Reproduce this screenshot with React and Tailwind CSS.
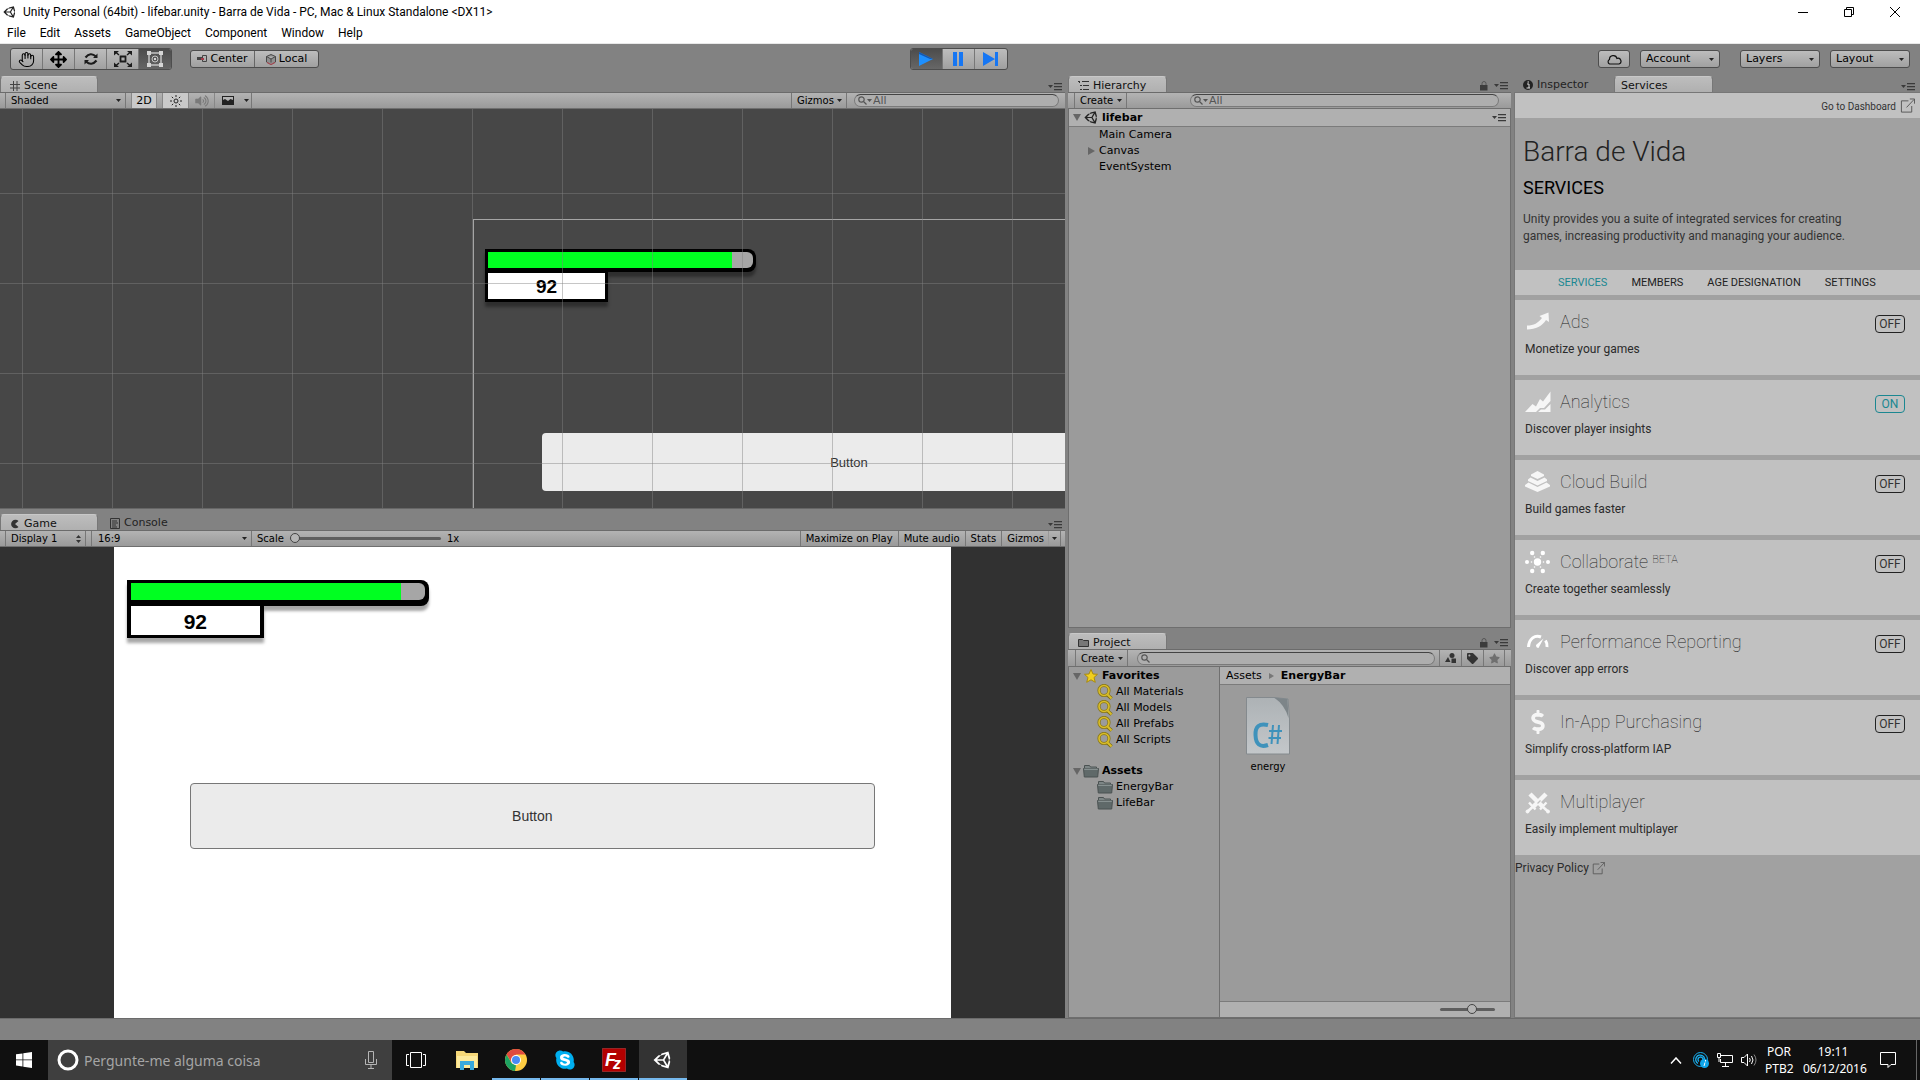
import React, { useState } from 'react'
import { FaUnity, FaArrowsAlt, FaDollarSign, FaTag, FaStar, FaSkype, FaVolumeUp } from 'react-icons/fa'
import { Hand } from 'lucide-react'

const EDITOR_FONT = "font-['DejaVu_Sans',Verdana,sans-serif]"
const WINDOWS_FONT = "font-['Noto_Sans','Segoe_UI',sans-serif]"
const WEB_FONT = 'font-[Roboto,sans-serif]'

const BAR = 'flex shrink-0 items-stretch border-y border-t-[#6b6b6b] border-b-[#6f6f6f] bg-gradient-to-b from-[#b3b3b3] to-[#9a9a9a] text-[10px] leading-[15px] text-black'
const RAISED = 'border border-[#4d4d4d] bg-gradient-to-b from-[#bdbdbd] to-[#a0a0a0]'

const services = [
  { name: 'Ads', text: 'Monetize your games', state: 'OFF', icon: AdsIcon },
  { name: 'Analytics', text: 'Discover player insights', state: 'ON', icon: AnalyticsIcon },
  { name: 'Cloud Build', text: 'Build games faster', state: 'OFF', icon: CloudBuildIcon },
  { name: 'Collaborate', tag: 'BETA', text: 'Create together seamlessly', state: 'OFF', icon: CollaborateIcon },
  { name: 'Performance Reporting', text: 'Discover app errors', state: 'OFF', icon: PerformanceIcon },
  { name: 'In-App Purchasing', text: 'Simplify cross-platform IAP', state: 'OFF', icon: PurchasingIcon },
  { name: 'Multiplayer', text: 'Easily implement multiplayer', icon: MultiplayerIcon }
]

/* ---------- icons ---------- */

function Caret({ className = 'text-[#222]' }) {
  return (
    <svg viewBox="0 0 5 3" className={`pointer-events-none h-[3px] w-[5px] shrink-0 ${className}`} fill="currentColor">
      <path d="M0 0h5L2.500 3z" />
    </svg>
  )
}

function MenuIcon() {
  return (
    <button aria-label="Panel menu" className="flex h-4 items-center">
      <svg viewBox="0 0 14 8" className="h-2 w-[14px]" fill="#3a3a3a">
        <path d="M0 2h5L2.500 5zM6 0h8v1.200H6zM6 3h8v1.200H6zM6 6h8v1.200H6z" />
      </svg>
    </button>
  )
}

function LockIcon() {
  return (
    <svg viewBox="0 0 8 10" className="h-[10px] w-2">
      <path d="M2 4V2.500A2 2 0 0 1 6 2.500V4" fill="none" stroke="#555" />
      <path d="M0 4h7.500v5.500H0z" fill="#3c3c3c" />
    </svg>
  )
}

function SearchIcon() {
  return (
    <svg viewBox="0 0 9 9" className="h-[9px] w-[9px] shrink-0" fill="none" stroke="#555" strokeWidth="1.200">
      <circle cx="3.500" cy="3.500" r="2.700" />
      <path d="M5.500 5.500L8.500 8.500" />
    </svg>
  )
}

function ExternalIcon({ className }) {
  return (
    <svg viewBox="0 0 16 16" className={className} fill="none" stroke="#555">
      <path d="M9 2.500H1.500v12h11V8M7 9.500L15 1M10.500 .5H15.500V5.500" />
    </svg>
  )
}

function AdsIcon() {
  return (
    <svg viewBox="0 0 26 24" className="h-6 w-[26px]" fill="#f6f6f6">
      <path d="M2 15.500C9 15.500 13 13 17 8L14.500 6L23.500 2.500L24 12L21 10C17 16 11 19.500 2 19.500z" />
    </svg>
  )
}

function AnalyticsIcon() {
  return (
    <svg viewBox="0 0 26 24" className="h-6 w-[26px]" fill="#f6f6f6">
      <path d="M0 22L7.500 14L11 16.500L15 9L18 11.500L25.500 1.500V11L19 18H15L11 22z" />
      <path d="M13 22L16 19.500H20L25.500 14V22z" />
    </svg>
  )
}

function CloudBuildIcon() {
  return (
    <svg viewBox="0 0 26 24" className="h-6 w-[26px]" fill="#f6f6f6">
      <path d="M6 4.500L12.500 1L19 4.500V6L12.500 9L6 6z" />
      <path d="M3 9.500L5.500 7.500L12.500 11L19.500 7.500L22 9.500V11L12.500 15.500L3 11z" />
      <path d="M0 15L3.500 12.500L12.500 17L21.500 12.500L25 15V16.500L12.500 22L0 16.500z" />
    </svg>
  )
}

function CollaborateIcon() {
  return (
    <svg viewBox="0 0 26 24" className="h-6 w-[26px]" fill="#fff">
      <circle cx="12.500" cy="12" r="3.700" />
      <circle cx="2" cy="12" r="2" />
      <circle cx="23" cy="12" r="2" />
      <circle cx="7.200" cy="3" r="2.200" />
      <circle cx="17.800" cy="3" r="2.200" />
      <circle cx="7.200" cy="21" r="2.200" />
      <circle cx="17.800" cy="21" r="2.200" />
      <circle cx="6.500" cy="12" r=".8" />
      <circle cx="18.500" cy="12" r=".8" />
      <circle cx="9.500" cy="7" r=".8" />
      <circle cx="15.500" cy="7" r=".8" />
      <circle cx="9.500" cy="17" r=".8" />
      <circle cx="15.500" cy="17" r=".8" />
    </svg>
  )
}

function PerformanceIcon() {
  return (
    <svg viewBox="0 0 26 24" className="h-6 w-[26px]" fill="none" stroke="#fff">
      <path d="M3.500 17C4 8.500 10 4.500 16 7M20.500 10.500Q22.500 13.500 22 17" strokeWidth="3" />
      <path d="M18.500 8.500L11 15Q11 18 13.500 18Z" fill="#fff" stroke="none" />
    </svg>
  )
}

function PurchasingIcon() {
  return <FaDollarSign className="h-6 w-[26px] text-[#f6f6f6]" />
}

function MultiplayerIcon() {
  return (
    <svg viewBox="0 0 26 24" className="h-6 w-[26px]" fill="none" stroke="#f6f6f6">
      <path d="M5 4L18 17M21 4L8 17" strokeWidth="4.500" />
      <path d="M12.500 13.500L15.500 10.500" stroke="#c1c1c1" strokeWidth="1.200" />
      <path d="M15 19.500L21.500 12.500M10.500 19.500L4 12.500" strokeWidth="2.400" />
      <path d="M18 17L23.500 22M7.500 17L2 22" strokeWidth="2.600" />
      <circle cx="23" cy="21.500" r="1.500" fill="#f6f6f6" />
      <circle cx="2.500" cy="21.500" r="1.500" fill="#f6f6f6" />
    </svg>
  )
}

function FolderIcon() {
  return (
    <svg viewBox="0 0 16 14" className="h-[14px] w-4 shrink-0">
      <path d="M1.500 1.500h5l1 1.500h6v3H1.500z" fill="#7d8686" stroke="#4b5252" />
      <path d="M.5 4.500h15l-.8 8.500H1.300z" fill="#5f6969" stroke="#4b5252" />
      <path d="M1.200 5.200h13.600" stroke="#99a2a2" />
    </svg>
  )
}

function FilterIcon() {
  return (
    <svg viewBox="0 0 16 16" className="h-4 w-4 shrink-0" fill="none">
      <path d="M10 10.500L14.500 14.500" stroke="#7b6b10" strokeWidth="3.600" />
      <circle cx="7" cy="6.500" r="5" stroke="#8a7818" strokeWidth="3.200" />
      <path d="M10.500 10.500L14.500 14.500" stroke="#d9bd2a" strokeWidth="2" />
      <circle cx="7" cy="6.500" r="5" stroke="#d9bd2a" strokeWidth="1.600" />
    </svg>
  )
}

/* ---------- shared controls ---------- */

function Tab({ active, icon, label, className = 'pl-[9px]' }) {
  return (
    <button
      role="tab"
      aria-selected={!!active}
      className={`flex h-4 items-center gap-1 pt-[2px] text-left text-[11px] leading-[14px] ${
        active
          ? 'rounded-t-sm border-x border-t border-[#777] border-t-[#c8c8c8] bg-gradient-to-b from-[#bdbdbd] to-[#b0b0b0] text-[#111]'
          : 'text-[#222]'
      } ${className}`}
    >
      {icon}
      {label}
    </button>
  )
}

function Select({ label, value, className = '', selectClass = '', children }) {
  return (
    <div className={`flex items-center ${className}`}>
      <select
        aria-label={label}
        className={`h-full min-w-0 flex-1 cursor-default appearance-none bg-transparent outline-none ${selectClass}`}
        defaultValue={value}
      >
        <option>{value}</option>
      </select>
      {children || <Caret />}
    </div>
  )
}

function SearchBox({ label, value = '', menu, className = '' }) {
  return (
    <label className={`flex h-[13px] items-center self-center rounded-full border border-[#7a7a7a] border-t-[#444] bg-[#aeaeae] px-[3px] ${className}`}>
      <SearchIcon />
      {menu && <Caret className="text-[#555]" />}
      <input aria-label={label} defaultValue={value} className="ml-px h-3 min-w-0 flex-1 bg-transparent text-[11px] leading-3 text-[#555] outline-none" />
    </label>
  )
}

const SLIDER = 'cursor-default appearance-none bg-transparent [&::-webkit-slider-runnable-track]:h-[3px] [&::-webkit-slider-runnable-track]:rounded-full [&::-webkit-slider-runnable-track]:bg-[#5e5e5e] [&::-webkit-slider-thumb]:-mt-[4px] [&::-webkit-slider-thumb]:h-[10px] [&::-webkit-slider-thumb]:w-[10px] [&::-webkit-slider-thumb]:appearance-none [&::-webkit-slider-thumb]:rounded-full [&::-webkit-slider-thumb]:border [&::-webkit-slider-thumb]:border-[#444] [&::-webkit-slider-thumb]:bg-[#b5b5b5]'

/* ---------- window chrome ---------- */

function TitleBar() {
  return (
    <header className={`h-11 shrink-0 border-b border-[#e8e8e8] bg-white text-black ${WEB_FONT}`}>
      <div className="flex h-6 items-center">
        <FaUnity className="ml-[3px] h-[14px] w-[14px] text-[#222]" />
        <h1 className="ml-[6px] text-[12px] leading-4">
          Unity Personal (64bit) - lifebar.unity - Barra de Vida - PC, Mac &amp; Linux Standalone &lt;DX11&gt;
        </h1>
        <div className="mr-[2px] ml-auto flex">
          <button aria-label="Minimize" className="flex h-5 w-[46px] items-center justify-center">
            <svg viewBox="0 0 10 10" className="h-[10px] w-[10px]" stroke="#000"><path d="M0 5.500h10" /></svg>
          </button>
          <button aria-label="Restore" className="flex h-5 w-[46px] items-center justify-center">
            <svg viewBox="0 0 10 10" className="h-[10px] w-[10px]" stroke="#000" fill="none"><path d="M.5 2.500h7v7h-7zM2.500 2.500v-2h7v7h-2" /></svg>
          </button>
          <button aria-label="Close" className="flex h-5 w-[46px] items-center justify-center">
            <svg viewBox="0 0 10 10" className="h-[10px] w-[10px]" stroke="#000"><path d="M0 0L10 10M10 0L0 10" /></svg>
          </button>
        </div>
      </div>
      <nav className="flex h-[18px] items-center gap-[14px] pl-[7px] text-[12px] leading-4">
        {['File', 'Edit', 'Assets', 'GameObject', 'Component', 'Window', 'Help'].map(item => (
          <button key={item}>{item}</button>
        ))}
      </nav>
    </header>
  )
}

function Toolbar() {
  const tool = 'flex w-8 items-center justify-center border-r border-[#777] last:border-r-0'
  const menu = 'h-[18px] w-20 rounded-[3px] px-[5px] text-[11px] leading-4'
  return (
    <div className="grid h-8 shrink-0 grid-cols-[1fr_auto_1fr] items-start pt-1">
      <div className="flex items-center">
        <div className={`ml-[10px] flex h-[22px] overflow-hidden rounded-[3px] ${RAISED}`}>
          <button aria-label="Hand" className={tool}><Hand className="h-[17px] w-[17px]" strokeWidth={1.5} /></button>
          <button aria-label="Move" className={tool}><FaArrowsAlt className="h-[17px] w-[17px]" /></button>
          <button aria-label="Rotate" className={tool}>
            <svg viewBox="0 0 16 16" className="h-4 w-4" fill="none" stroke="#1c1c1c" strokeWidth="2.200">
              <path d="M2.500 6.500Q7.500 .5 13 5.500M13.500 9.500Q8.500 15.500 3 10.500" />
              <path d="M14.500 2.500V7H10zM1.500 13.500V9H6z" fill="#1c1c1c" stroke="none" />
            </svg>
          </button>
          <button aria-label="Scale" className={tool}>
            <svg viewBox="0 0 18 16" className="h-4 w-[18px]" fill="none" stroke="#1c1c1c">
              <path d="M6.500 5.500h5v5h-5z" strokeWidth="1.800" />
              <path d="M5 4L1.500 1M13 4L16.500 1M5 12L1.500 15M13 12L16.500 15" strokeWidth="1.500" />
              <path d="M0 0h5L0 4.500zM18 0h-5L18 4.500zM0 16h5L0 11.500zM18 16h-5L18 11.500z" fill="#1c1c1c" stroke="none" />
            </svg>
          </button>
          <button aria-label="Rect" className={`${tool} bg-gradient-to-b from-[#4c4c4c] to-[#656565]`}>
            <svg viewBox="0 0 18 18" className="h-[18px] w-[18px]" fill="none" stroke="#c4c4c4">
              <path d="M3 3h12v12H3z" strokeWidth="1.500" />
              <circle cx="9" cy="9" r="3" />
              <path d="M8 8h2v2H8zM1 1h4v4H1zM13 1h4v4h-4zM1 13h4v4H1zM13 13h4v4h-4z" fill="#d5d5d5" stroke="none" />
            </svg>
          </button>
        </div>
        <div className={`ml-[18px] flex h-[18px] rounded-[3px] text-[11px] leading-4 ${RAISED}`}>
          <button className="flex w-16 items-center justify-center gap-[3px] border-r border-[#666]">
            <svg viewBox="0 0 10 8" className="h-2 w-[10px]">
              <path d="M0 2h5v3H0z" fill="#444" />
              <path d="M5.500 .5h4v6h-4z" fill="none" stroke="#444" />
              <path d="M4 3h3v2H4z" fill="#a33b4a" />
            </svg>
            Center
          </button>
          <button className="flex w-[63px] items-center justify-center gap-[3px]">
            <svg viewBox="0 0 10 11" className="h-[11px] w-[10px]" fill="#8f8f8f" stroke="#484848">
              <path d="M5 .5L9.500 2.500V8L5 10.500L.5 8V2.500zM.5 2.500L5 5L9.500 2.500M5 5V10" />
              <path d="M1 8.500L5 10.500L9 8.500" stroke="#b0404c" />
            </svg>
            Local
          </button>
        </div>
      </div>
      <div className={`mr-[3px] flex h-[22px] overflow-hidden rounded-[3px] ${RAISED}`}>
        <button aria-label="Play" className={`${tool} bg-gradient-to-b from-[#4c4c4c] to-[#676767]`}>
          <svg viewBox="0 0 16 14" className="h-[14px] w-4"><path d="M1 0L15 7L1 14z" fill="#1e90ff" /><path d="M1 0L15 7H12L1 2z" fill="#1658b0" /></svg>
        </button>
        <button aria-label="Pause" className={tool}>
          <svg viewBox="0 0 10 14" className="h-[14px] w-[10px]" fill="#1676f3"><path d="M0 0h4v14H0zM6 0h4v14H6z" /></svg>
        </button>
        <button aria-label="Step" className={tool}>
          <svg viewBox="0 0 16 14" className="h-[14px] w-4" fill="#1676f3"><path d="M0 0L12 7L0 14zM12 0h3v14h-3z" /></svg>
        </button>
      </div>
      <div className="mt-[2px] flex items-center justify-end pr-[10px]">
        <button aria-label="Cloud services" className={`mr-[10px] flex h-[18px] w-8 items-center justify-center rounded-[3px] ${RAISED}`}>
          <svg viewBox="0 0 16 11" className="h-[11px] w-4" fill="none" stroke="#111" strokeWidth="1.200">
            <path d="M3.500 10A2.500 2.500 0 0 1 3.500 5.500A3.800 3.800 0 0 1 11 4.500A2.800 2.800 0 0 1 13 10z" />
          </svg>
        </button>
        <Select label="Account" value="Account" className={`mr-5 ${menu} ${RAISED}`} />
        <Select label="Layers" value="Layers" className={`mr-[10px] ${menu} ${RAISED}`} />
        <Select label="Layout" value="Layout" className={`${menu} ${RAISED}`} />
      </div>
    </div>
  )
}

/* ---------- scene and game ---------- */

function LifeBar({ value, small }) {
  return (
    <div className={`font-['Liberation_Sans',Arial,sans-serif] ${small ? 'w-[271px]' : 'w-[302px]'}`}>
      <div className={`rounded-r-lg bg-black shadow-[0_5px_3px_rgba(0,0,0,0.35)] ${small ? 'pt-[3px] pr-[3px] pb-1 pl-[3px]' : 'pt-[3px] pr-1 pb-[6px] pl-1'}`}>
        <div className={`overflow-hidden rounded-r-md bg-[#a6a6a6] ${small ? 'h-4' : 'h-[17px]'}`}>
          <div className="h-full bg-[#00ff21]" style={{ width: `${value}%` }} />
        </div>
      </div>
      <div
        className={`relative flex items-center justify-center border-black bg-white pt-[2px] font-bold text-black shadow-[0_5px_3px_rgba(0,0,0,0.35)] ${
          small ? 'h-[30px] w-[123px] border-x-[3px] border-t border-b-[3px] text-[19px]' : 'h-[32px] w-[137px] border-x-4 border-b-[3px] text-[21px]'
        }`}
      >
        {value}
      </div>
    </div>
  )
}

function ScenePanel() {
  return (
    <section className="flex min-h-0 flex-col">
      <div role="tablist" className="flex h-4 shrink-0 items-end">
        <Tab
          active
          label="Scene"
          className="w-[98px] pl-[9px]"
          icon={
            <svg viewBox="0 0 10 10" className="h-[10px] w-[10px]" stroke="#444"><path d="M3.500 0v10M7 0v10M0 3.500h10M0 7h10" /></svg>
          }
        />
        <div className="ml-auto flex h-[10px] items-center pr-[3px]"><MenuIcon /></div>
      </div>
      <div className={`h-[17px] ${BAR}`}>
        <Select label="Draw mode" value="Shaded" className="ml-[5px] w-[121px] border-x border-[#777] pr-1" selectClass="pl-[5px]" />
        <button className="ml-[5px] w-[26px] border-x border-[#888] bg-[#c9c9c9] text-[11px]">2D</button>
        <button aria-label="Scene lighting" className="ml-[5px] flex w-[27px] items-center justify-center border-x border-[#888] bg-[#c9c9c9]">
          <svg viewBox="0 0 12 12" className="h-3 w-3" fill="none" stroke="#222">
            <circle cx="6" cy="6" r="2" />
            <path d="M6 0v2M6 10v2M0 6h2M10 6h2M1.800 1.800l1.400 1.400M8.800 8.800l1.400 1.400M1.800 10.200l1.400-1.400M8.800 3.200l1.400-1.400" />
          </svg>
        </button>
        <button aria-label="Scene audio" className="flex w-[26px] items-center justify-center border-r border-[#888]">
          <FaVolumeUp className="h-3 w-[14px] text-[#7a7a7a]" />
        </button>
        <button aria-label="Scene effects" className="flex w-[37px] items-center gap-[10px] border-r border-[#777] pl-[7px]">
          <svg viewBox="0 0 12 9" className="h-[9px] w-3"><path d="M0 0h12v9H0z" fill="#222" /><path d="M1 4V1h10v3L8.500 3L6 5L3 3z" fill="#b5b5b5" /></svg>
          <Caret />
        </button>
        <button className="ml-auto flex w-14 items-center justify-between border-x border-[#777] pr-1 pl-[5px]">Gizmos<Caret /></button>
        <SearchBox label="Search scene" value="All" menu className="mr-[6px] ml-[7px] w-[205px]" />
      </div>
      <div className="relative min-h-0 flex-1 overflow-hidden border-b border-[#666] bg-[#474747]">
        <div className="absolute top-[110px] left-[473px] h-[576px] w-[1024px] border-t border-l border-[#a5a5a5]" />
        <div className="absolute top-[140px] left-[485px]"><LifeBar value={92} small /></div>
        <button className="absolute top-[324px] left-[542px] h-[58px] w-[614px] rounded bg-[#ebebeb] pt-px font-['Liberation_Sans',Arial,sans-serif] text-[13px] text-[#333]">
          Button
        </button>
        <svg className="pointer-events-none absolute inset-0 h-full w-full">
          <defs>
            <pattern id="scene-grid" width="90" height="90" x="22" y="84" patternUnits="userSpaceOnUse">
              <path d="M.5 0V90M0 .5H90" stroke="#808080" strokeOpacity=".45" fill="none" />
            </pattern>
          </defs>
          <rect width="100%" height="100%" fill="url(#scene-grid)" />
        </svg>
      </div>
    </section>
  )
}

function GamePanel() {
  const [scale, setScale] = useState(0)
  const toggle = 'border-l border-[#777]'
  return (
    <section className="flex min-h-0 flex-col">
      <div role="tablist" className="flex h-[17px] shrink-0 items-end">
        <Tab
          active
          label="Game"
          className="w-[98px] pl-[9px]"
          icon={<svg viewBox="0 0 10 10" className="h-[10px] w-[10px]" fill="#333"><path d="M8.500 2A4.300 4.300 0 1 0 8.500 8L5 5z" /></svg>}
        />
        <Tab
          label="Console"
          className="ml-[3px] pl-[9px]"
          icon={
            <svg viewBox="0 0 10 11" className="h-[11px] w-[10px]" fill="none" stroke="#333"><path d="M.5 .5h9v10h-9zM2 3h5M2 5h6M2 7h4M2 9h5" /></svg>
          }
        />
        <div className="ml-auto flex h-[10px] items-center pr-[3px]"><MenuIcon /></div>
      </div>
      <div className={`h-[17px] ${BAR}`}>
        <Select label="Display" value="Display 1" className="ml-[5px] w-[81px] border-x border-[#777] pr-1" selectClass="pl-[5px]">
          <svg viewBox="0 0 5 8" className="h-2 w-[5px]" fill="#333"><path d="M0 3h5L2.500 0zM0 5h5L2.500 8z" /></svg>
        </Select>
        <Select label="Aspect" value="16:9" className="ml-[5px] w-[161px] border-x border-[#777] pr-1" selectClass="pl-[6px]" />
        <label className="flex items-center pl-[5px]">
          Scale
          <input
            type="range"
            min="0"
            max="100"
            value={scale}
            onChange={e => setScale(Number(e.target.value))}
            className={`mx-[6px] h-3 w-[151px] ${SLIDER}`}
          />
          <output>1x</output>
        </label>
        <button className={`ml-auto px-[5px] ${toggle}`}>Maximize on Play</button>
        <button className={`px-[5px] ${toggle}`}>Mute audio</button>
        <button className={`px-[5px] ${toggle}`}>Stats</button>
        <button className={`flex items-center gap-1 pl-[5px] ${toggle}`}>
          Gizmos
          <span className="flex h-full w-3 items-center justify-center border-l border-[#999]"><Caret /></span>
        </button>
        <div className="w-[5px] border-l border-[#777]" />
      </div>
      <div className="flex min-h-0 flex-1 justify-center bg-[#313131]">
        <div className="relative aspect-video h-full bg-white">
          <div className="absolute top-[33px] left-[13px]"><LifeBar value={92} /></div>
          <button className="absolute top-[236px] left-[76px] h-[66px] w-[685px] rounded border border-[#777] bg-[#ebebeb] pt-px font-['Liberation_Sans',Arial,sans-serif] text-[14px] text-[#333]">
            Button
          </button>
        </div>
      </div>
    </section>
  )
}

/* ---------- hierarchy and project ---------- */

function HierarchyPanel() {
  return (
    <section className="flex min-h-0 flex-col">
      <div role="tablist" className="flex h-4 shrink-0 items-end">
        <Tab
          active
          label="Hierarchy"
          className="w-[99px] pl-[9px]"
          icon={<svg viewBox="0 0 11 9" className="h-[9px] w-[11px]" stroke="#333"><path d="M0 .5h2M4 .5h7M2 4.500h2M5 4.500h6M2 8.500h2M5 8.500h6M1.500 1v1" /></svg>}
        />
        <div className="ml-auto flex h-3 items-center gap-[6px] pr-[3px]"><LockIcon /><MenuIcon /></div>
      </div>
      <div className={`h-[17px] ${BAR}`}>
        <button className="ml-[6px] flex w-[53px] items-center justify-between border-x border-[#777] pr-1 pl-[5px]">Create<Caret /></button>
        <SearchBox label="Search hierarchy" value="All" menu className="mr-3 ml-auto w-[309px]" />
      </div>
      <div className="min-h-0 flex-1 border-x border-b border-[#6e6e6e] bg-[#9b9b9b] text-[11px] leading-4 text-black">
        <div className="flex h-[18px] items-center border-b border-[#7b7b7b] bg-[#b0b0b0] pr-1 pl-1">
          <svg viewBox="0 0 8 7" className="h-[7px] w-2" fill="#666"><path d="M0 0h8L4 7z" /></svg>
          <FaUnity className="mr-[3px] ml-[3px] h-[15px] w-[15px] text-[#222]" />
          <strong className="flex-1 pt-px">lifebar</strong>
          <MenuIcon />
        </div>
        <ul className="pl-[30px]">
          <li>Main Camera</li>
          <li className="-ml-[11px] flex items-center gap-1">
            <svg viewBox="0 0 7 8" className="h-2 w-[7px]" fill="#666"><path d="M0 0v8L7 4z" /></svg>
            Canvas
          </li>
          <li>EventSystem</li>
        </ul>
      </div>
    </section>
  )
}

function TreeHead({ icon, label }) {
  return (
    <div className="flex h-4 items-center pl-1">
      <svg viewBox="0 0 8 7" className="h-[7px] w-2" fill="#666"><path d="M0 0h8L4 7z" /></svg>
      <span className="mr-[3px] ml-[2px] flex w-4 justify-center">{icon}</span>
      <strong>{label}</strong>
    </div>
  )
}

function ProjectPanel() {
  return (
    <section className="flex min-h-0 flex-col">
      <div role="tablist" className="flex h-4 shrink-0 items-end">
        <Tab
          active
          label="Project"
          className="w-[99px] pl-[9px]"
          icon={<svg viewBox="0 0 11 9" className="h-[9px] w-[11px]" fill="#777" stroke="#333"><path d="M.5 1.500h4l1 1h5v6H.5z" /></svg>}
        />
        <div className="ml-auto flex h-3 items-center gap-[6px] pr-[3px]"><LockIcon /><MenuIcon /></div>
      </div>
      <div className={`h-[18px] ${BAR}`}>
        <button className="ml-[7px] flex w-[53px] items-center justify-between border-x border-[#777] pr-1 pl-[5px]">Create<Caret /></button>
        <SearchBox label="Search project" className="ml-[9px] flex-1" />
        <button aria-label="Search by type" className="ml-1 flex w-[22px] items-center justify-center border-l border-[#777]">
          <svg viewBox="0 0 11 10" className="h-[10px] w-[11px]" fill="#333"><circle cx="7" cy="2.500" r="2.500" /><path d="M0 9L3 4L5.500 9zM6.500 5.500H11V10H6.500z" /></svg>
        </button>
        <button aria-label="Search by label" className="flex w-[22px] items-center justify-center border-l border-[#777]">
          <FaTag className="h-[11px] w-[11px] text-[#333]" />
        </button>
        <button aria-label="Save search" className="flex w-[22px] items-center justify-center border-x border-[#777]">
          <FaStar className="h-[11px] w-[11px] text-[#6f6f6f]" />
        </button>
        <div className="w-[6px]" />
      </div>
      <div className="flex min-h-0 flex-1 border-x border-b border-[#6e6e6e] bg-[#9b9b9b] text-[11px] leading-4 text-black">
        <nav className="w-[151px] shrink-0 border-r border-[#707070] pt-px">
          <TreeHead
            label="Favorites"
            icon={<svg viewBox="0 0 14 14" className="h-[14px] w-[14px]"><path d="M7 .5L9 5L13.500 5.300L10 8.500L11.300 13.300L7 10.800L2.700 13.300L4 8.500L.5 5.300L5 5z" fill="#f0cf1f" stroke="#a88a10" /></svg>}
          />
          <ul className="mb-[15px]">
            {['All Materials', 'All Models', 'All Prefabs', 'All Scripts'].map(item => (
              <li key={item} className="flex h-4 items-center gap-[3px] pl-7"><FilterIcon />{item}</li>
            ))}
          </ul>
          <TreeHead label="Assets" icon={<FolderIcon />} />
          <ul>
            {['EnergyBar', 'LifeBar'].map(item => (
              <li key={item} className="flex h-4 items-center gap-[3px] pl-7"><FolderIcon />{item}</li>
            ))}
          </ul>
        </nav>
        <div className="flex min-w-0 flex-1 flex-col">
          <div className="flex h-[18px] shrink-0 items-center gap-[7px] border-b border-[#7b7b7b] bg-[#b0b0b0] pl-[6px]">
            Assets
            <svg viewBox="0 0 5 6" className="h-[6px] w-[5px]" fill="#777"><path d="M0 0v6L5 3z" /></svg>
            <strong>EnergyBar</strong>
          </div>
          <div className="flex-1 pt-[10px] pl-[17px]">
            <figure className="flex w-[62px] flex-col items-center">
              <svg viewBox="0 0 46 62" className="h-[62px] w-[46px]">
                <defs>
                  <linearGradient id="sheet" x1="0" y1="0" x2="0" y2="1">
                    <stop offset="0" stopColor="#adb2b5" />
                    <stop offset="1" stopColor="#c3c7ca" />
                  </linearGradient>
                </defs>
                <path d="M1.500 2.500H29L43 4L44.500 24V59H1.500z" fill="url(#sheet)" stroke="#848a8e" />
                <path d="M29 2.500L42.500 4L43.500 23Q40 10 29 2.500" fill="#7d8589" />
                <path d="M23 30Q10 27 10.500 40Q11 54 23 50" fill="none" stroke="#3f92bb" strokeWidth="4" />
                <path d="M28 30L26.500 49M34 30L32.500 49M24 36H37M23.500 43H36" fill="none" stroke="#3f92bb" strokeWidth="2" />
              </svg>
              <figcaption className="mt-[2px] text-[10px]">energy</figcaption>
            </figure>
          </div>
          <div className="flex h-4 shrink-0 items-center justify-end border-t border-[#7b7b7b] bg-[#b0b0b0] pr-[15px]">
            <input type="range" aria-label="Icon size" defaultValue="60" className={`h-3 w-[55px] ${SLIDER}`} />
          </div>
        </div>
      </div>
    </section>
  )
}

/* ---------- services ---------- */

function ServiceCard({ name, tag, text, state, icon: Icon }) {
  const on = state === 'ON'
  return (
    <li className="flex h-[75px] items-start justify-between bg-[#c1c1c1] pt-[10px] pr-[15px] pl-[10px]">
      <div>
        <div className="flex h-6 items-center">
          <Icon />
          <h3 className="ml-[9px] text-[18px] leading-6 font-thin text-[#222]">
            {name}
            {tag && <sup className="ml-1 text-[11px] font-thin">{tag}</sup>}
          </h3>
        </div>
        <p className="mt-[7px] text-[12px] leading-4 text-[#2b2b2b]">{text}</p>
      </div>
      {state && (
        <button
          aria-pressed={on}
          className={`mt-[5px] h-[18px] w-[30px] rounded border text-[12px] leading-4 ${on ? 'border-[#1a8791] text-[#1a8791]' : 'border-[#222] text-[#333]'}`}
        >
          {state}
        </button>
      )}
    </li>
  )
}

function ServicesPanel() {
  return (
    <section className="flex min-h-0 flex-col">
      <div role="tablist" className="flex h-4 shrink-0 items-end">
        <Tab
          label="Inspector"
          className="w-[100px] pl-[9px]"
          icon={
            <svg viewBox="0 0 10 10" className="h-[10px] w-[10px]"><circle cx="5" cy="5" r="5" fill="#222" /><path d="M4 4h2v4M3.500 8h3.500M4.500 2h1.500" stroke="#ddd" fill="none" /></svg>
          }
        />
        <Tab active label="Services" className="w-[99px] pl-[6px]" />
        <div className="ml-auto flex h-[10px] items-center pr-[5px]"><MenuIcon /></div>
      </div>
      <div className={`min-h-0 flex-1 overflow-hidden border-t border-b border-l border-[#777] bg-[#a1a1a1] ${WEB_FONT}`}>
        <div className="flex h-[25px] items-center justify-end gap-1 bg-[#c1c1c1] pr-[5px]">
          <a href="#dashboard" className="pt-[2px] text-[10px] leading-4 text-[#333]">Go to Dashboard</a>
          <ExternalIcon className="h-4 w-[15px]" />
        </div>
        <div className="h-[152px] px-2 pt-4">
          <h2 className="text-[28px] leading-9 font-light text-[#222]">Barra de Vida</h2>
          <p className="mt-[6px] text-[18px] leading-6 text-black">SERVICES</p>
          <p className="mt-[11px] max-w-[350px] text-[12px] leading-[17px] text-[#333]">
            Unity provides you a suite of integrated services for creating games, increasing productivity and managing your audience.
          </p>
        </div>
        <nav className="flex h-[25px] items-center gap-6 bg-[#c1c1c1] pt-px pl-[43px] text-[11px] text-[#222]">
          <a href="#services" className="text-[#1a8791]">SERVICES</a>
          <a href="#members">MEMBERS</a>
          <a href="#age">AGE DESIGNATION</a>
          <a href="#settings">SETTINGS</a>
        </nav>
        <ul className="mt-[5px] flex flex-col gap-[5px]">
          {services.map(service => <ServiceCard key={service.name} {...service} />)}
        </ul>
        <a href="#privacy" className="mt-[5px] flex items-center gap-[3px] text-[12px] leading-4 text-[#2b2b2b]">
          Privacy Policy
          <ExternalIcon className="h-[13px] w-[13px]" />
        </a>
      </div>
    </section>
  )
}

/* ---------- taskbar ---------- */

function TaskButton({ label, running, active, children }) {
  return (
    <button
      aria-label={label}
      className={`flex h-10 w-12 items-center justify-center border-b-2 pt-[2px] ${running ? 'border-[#76b9ed]' : 'border-transparent'} ${active ? 'bg-[#333]' : ''}`}
    >
      {children}
    </button>
  )
}

function Taskbar() {
  return (
    <footer className={`flex h-10 shrink-0 bg-[#101010] text-white ${WINDOWS_FONT}`}>
      <button aria-label="Start" className="flex w-12 items-center justify-center">
        <svg viewBox="0 0 16 16" className="h-4 w-4" fill="#fff"><path d="M0 2.300L6.500 1.400V7.500H0zM7.300 1.300L16 0V7.500H7.300zM0 8.300H6.500V14.500L0 13.600zM7.300 8.300H16V16L7.300 14.700z" /></svg>
      </button>
      <label className="flex w-[344px] items-center bg-[#3f3f3f] pl-[9px]">
        <svg viewBox="0 0 22 22" className="h-[22px] w-[22px] shrink-0"><circle cx="11" cy="11" r="9" fill="none" stroke="#fff" strokeWidth="3" /></svg>
        <input aria-label="Pesquisa" placeholder="Pergunte-me alguma coisa" className="ml-[5px] min-w-0 flex-1 bg-transparent text-[14px] outline-none placeholder:text-[#a5a5a5]" />
        <svg viewBox="0 0 12 18" className="mr-[15px] h-[18px] w-3" fill="none" stroke="#b5b5b5"><path d="M3.500 .5h5v11h-5zM.5 8v5.500h11V8M6 13.500V17M3 17.500h6" /></svg>
      </label>
      <TaskButton label="Task view">
        <svg viewBox="0 0 20 16" className="h-4 w-5" fill="none" stroke="#fff"><path d="M4.500 .5h11v15h-11zM3 2.500H.5v11H3M17 2.500h2.500v11H17" /></svg>
      </TaskButton>
      <div className="ml-[3px] flex gap-px">
        <TaskButton label="Explorer">
          <svg viewBox="0 0 22 20" className="h-5 w-[22px]"><path d="M0 1h8l2 2h12v15H0z" fill="#f6d878" /><path d="M1 6h20v12H1z" fill="#fdea9c" /><path d="M4 20v-9h14v9h-4v-5H8v5z" fill="#38a9dd" /></svg>
        </TaskButton>
        <TaskButton label="Chrome" running>
          <svg viewBox="0 0 22 22" className="h-[22px] w-[22px]">
            <circle cx="11" cy="11" r="11" fill="#ffcd42" />
            <path d="M1.500 5.500A11 11 0 0 1 20.500 5.500H11L6.500 13.500z" fill="#e04a3f" />
            <path d="M1.500 5.500L6.500 14L11 16.500L10 22A11 11 0 0 1 1.500 5.500z" fill="#1da362" />
            <circle cx="11" cy="11" r="5" fill="#fff" />
            <circle cx="11" cy="11" r="4" fill="#4a8af4" />
          </svg>
        </TaskButton>
        <TaskButton label="Skype" running>
          <svg viewBox="0 0 22 22" className="h-[22px] w-[22px]"><circle cx="11" cy="11" r="7" fill="#fff" /><FaSkype size={22} color="#00aff0" /></svg>
        </TaskButton>
        <TaskButton label="FileZilla" running>
          <svg viewBox="0 0 24 24" className="h-6 w-6">
            <path d="M.5 .5h23v23H.5z" fill="#b30000" stroke="#c44" strokeDasharray="1 1" />
            <text x="3" y="18" fontSize="18" fontWeight="bold" fontStyle="italic" fontFamily="Liberation Sans, sans-serif" fill="#fff">F</text>
            <text x="11" y="21" fontSize="16" fontWeight="bold" fontStyle="italic" fontFamily="Liberation Sans, sans-serif" fill="#fff">z</text>
          </svg>
        </TaskButton>
        <TaskButton label="Unity" running active><FaUnity className="h-5 w-5 text-white" /></TaskButton>
      </div>
      <div className="ml-auto flex items-center text-[12px] leading-4">
        <svg viewBox="0 0 12 7" className="h-[7px] w-3" fill="none" stroke="#fff" strokeWidth="1.500"><path d="M1 6.500L6 1L11 6.500" /></svg>
        <svg viewBox="0 0 16 16" className="ml-[11px] h-4 w-4" fill="none" stroke="#19b0f0">
          <circle cx="7.500" cy="7.500" r="7" />
          <path d="M5 11.500A4.500 4.500 0 1 1 11 10M6 9.500A2.500 2.500 0 1 1 9.500 9" strokeWidth="1.300" />
          <circle cx="11.500" cy="11.500" r="4.500" fill="#0ea5ea" stroke="none" />
          <path d="M12 10.500L11 14M12.500 8v1.500" stroke="#fff" />
        </svg>
        <svg viewBox="0 0 16 14" className="ml-2 h-[14px] w-4" fill="none" stroke="#fff"><path d="M4 2.500H15.500V9.500H3.500V6M8.500 9.500V13M5 13.500H12M.5 .5h3v4h-3zM2 4.500V9" /></svg>
        <svg viewBox="0 0 16 14" className="ml-2 h-[14px] w-4" fill="none" stroke="#fff"><path d="M.5 4.500H3L6.500 1V13L3 9.500H.5zM8.500 5Q10 7 8.500 9M10.500 3Q13.500 7 10.500 11" /><path d="M13 1.500Q17 7 13 12.500" stroke="#888" /></svg>
        <div className="ml-2 w-7 text-center leading-[17px]"><p>POR</p><p>PTB2</p></div>
        <time className="ml-[10px] w-[60px] text-center leading-[17px] whitespace-nowrap"><p>19:11</p><p>06/12/2016</p></time>
        <svg viewBox="0 0 16 16" className="ml-[17px] h-4 w-4" fill="none" stroke="#fff"><path d="M.5 .5h15v12H11L8 15.500V12.500H.5z" /></svg>
        <div className="ml-5 h-10 w-1 border-l border-[#666]" />
      </div>
    </footer>
  )
}

export default function App() {
  return (
    <div className={`flex h-screen flex-col overflow-hidden bg-[#828282] ${EDITOR_FONT}`}>
      <TitleBar />
      <Toolbar />
      <main className="flex min-h-0 flex-1 gap-[3px]">
        <div className="grid min-w-0 flex-1 grid-rows-[433fr_505fr] gap-1">
          <ScenePanel />
          <GamePanel />
        </div>
        <div className="grid w-[443px] shrink-0 grid-rows-[552fr_385fr] gap-[5px]">
          <HierarchyPanel />
          <ProjectPanel />
        </div>
        <div className="grid w-[406px] shrink-0">
          <ServicesPanel />
        </div>
      </main>
      <div className="h-[22px] shrink-0 border-t border-[#6b6b6b]" />
      <Taskbar />
    </div>
  )
}
